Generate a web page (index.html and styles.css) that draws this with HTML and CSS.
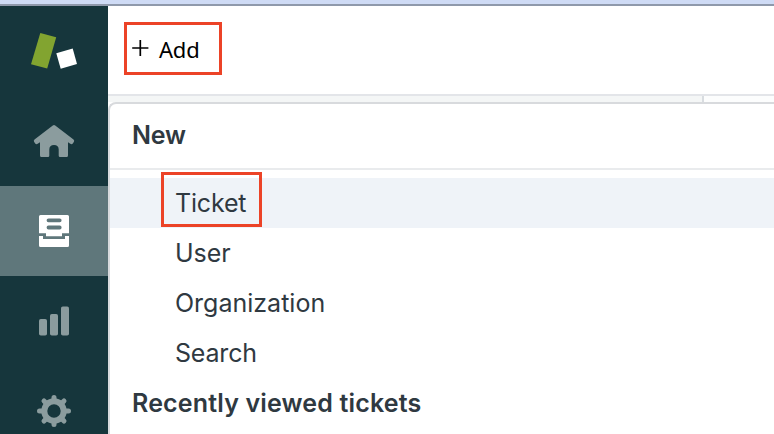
FILE: index.html
```html
<!DOCTYPE html>
<html lang="en">
<head>
<meta charset="utf-8">
<title>Add menu</title>
<link rel="stylesheet" href="styles.css">
</head>
<body>
<div class="window-edge"></div>
<div class="app">
  <nav class="sidebar">
    <a class="logo" aria-label="Home page">
      <svg width="108" height="90" viewBox="0 0 108 90"><path fill="#82a430" d="M40.3 27 56.2 31.2 47.2 62.5 31 58.3z"/><path fill="#fff" d="M56.3 47.3 72.7 42.6 77 58 60.7 62.7z"/></svg>
    </a>
    <a class="nav-item" aria-label="Home">
      <svg width="108" height="90" viewBox="0 0 108 90"><path fill="#8b9c9e" d="M52.8 29.5Q54 28.500 55.2 29.500L73.500 43.500Q74.800 44.700 73.800 46L72.800 47.500Q71.700 48.800 70.300 47.800L68 46.200V59.500Q68 61 66.500 61H60Q58.700 61 58.700 59.700V53.500Q58.700 49 54 49Q49.300 49 49.300 53.500V59.700Q49.300 61 48 61H41.500Q40 61 40 59.500V46.200L37.700 47.800Q36.300 48.800 35.200 47.500L34.200 46Q33.200 44.700 34.500 43.500z"/></svg>
    </a>
    <a class="nav-item active" aria-label="Views">
      <svg width="108" height="90" viewBox="0 0 108 90"><path fill="#fff" d="M40.500 29H67.500Q69 29 69 30.500V47.300H62V50.300H46V47.300H39V30.500Q39 29 40.500 29zM39 50H43V53H65V50H69V59.500Q69 61 67.500 61H40.500Q39 61 39 59.500z"/><path stroke="#5f777b" stroke-width="3.800" stroke-linecap="round" d="M48.500 34.300H59.700M48.500 41.500H59.700"/></svg>
    </a>
    <a class="nav-item" aria-label="Reporting">
      <svg width="108" height="90" viewBox="0 0 108 90" fill="#8b9c9e"><rect x="39" y="43" width="8" height="16.500" rx="1.800"/><rect x="50" y="38" width="8" height="21.500" rx="1.800"/><rect x="61" y="30.500" width="8" height="29" rx="1.800"/></svg>
    </a>
    <a class="nav-item" aria-label="Settings">
      <svg width="108" height="90" viewBox="0 0 108 90"><g stroke="#8b9c9e" fill="none"><circle cx="54" cy="45" r="9.700" stroke-width="6"/><path stroke-width="5" stroke-linecap="round" d="M54 33V31.500M54 57V58.500M42 45H39.500M66 45H68.500M45.500 36.500 44 35M62.500 36.500 64 35M45.500 53.500 44 55M62.500 53.500 64 55"/></g></svg>
    </a>
  </nav>
  <main class="content">
    <header class="toolbar">
      <button class="add">
        <svg width="18" height="18" viewBox="0 0 18 18"><path stroke="#000" stroke-width="1.700" d="M9.300 1V17M1.200 9H17.400"/></svg>
        <span>Add</span>
      </button>
    </header>
    <div class="tab-strip"><div class="strip-left"></div></div>
    <section class="menu">
      <h2 class="heading new">New</h2>
      <ul class="items">
        <li class="item selected"><span class="marker"></span><span class="tight">Ticket</span></li>
        <li class="item">User</li>
        <li class="item">Organization</li>
        <li class="item tight">Search</li>
      </ul>
      <h2 class="heading recent">Recently viewed tickets</h2>
    </section>
  </main>
</div>
</body>
</html>
```
FILE: styles.css
```css
* { box-sizing: border-box; }
body {
  margin: 0;
  height: 434px;
  overflow: hidden;
  background: #fff;
  color: #2f3941;
  font-family: Inter, "Liberation Sans", sans-serif;
}
.window-edge { height: 6px; background: #cfdbf5; border-bottom: 2px solid #8f99ab; }
.app { display: flex; height: 428px; }
.sidebar { width: 108px; flex: none; background: #16363c; overflow: hidden; }
.sidebar a { display: block; height: 90px; }
.sidebar svg { display: block; }
.nav-item.active { background: #5f777b; }
.content { flex: 1; min-width: 0; display: flex; flex-direction: column; }
.toolbar { height: 90px; flex: none; padding: 16px; border-bottom: 2px solid #e3e5e9; }
.add {
  display: flex;
  align-items: center;
  width: 98px;
  height: 53px;
  padding: 0 0 0 4px;
  gap: 10px;
  border: 3px solid #ec4327;
  background: #fff;
  color: #000;
  font: 22px "Noto Sans", sans-serif;
  letter-spacing: -0.2px;
}
.add svg { margin-bottom: 1px; }
.tab-strip { height: 6px; flex: none; background: #fcfdfd; }
.strip-left { width: 596px; height: 6px; background: #f4f6f6; border-right: 2px solid #d8dce0; }
.menu {
  height: 340px;
  border: solid #d8dadd;
  border-width: 2px 0 0 2px;
  border-top-left-radius: 8px;
  background: #fff;
}
.heading { margin: 0; padding-left: 22px; font-size: 25px; font-weight: 620; white-space: nowrap; }
.new { height: 66px; line-height: 62px; letter-spacing: -0.25px; border-bottom: 2px solid #e9ebed; }
.items { list-style: none; margin: 0; padding: 8px 0 0; }
.item { position: relative; height: 50px; padding-left: 65px; font-size: 25px; line-height: 50px; }
.tight { letter-spacing: -0.18px; }
.selected { background: #eff3f8; }
.marker { position: absolute; left: 51px; top: -6px; width: 101px; height: 55px; border: 3px solid #ec4327; }
.recent { height: 50px; line-height: 50px; letter-spacing: 0.16px; }
```
